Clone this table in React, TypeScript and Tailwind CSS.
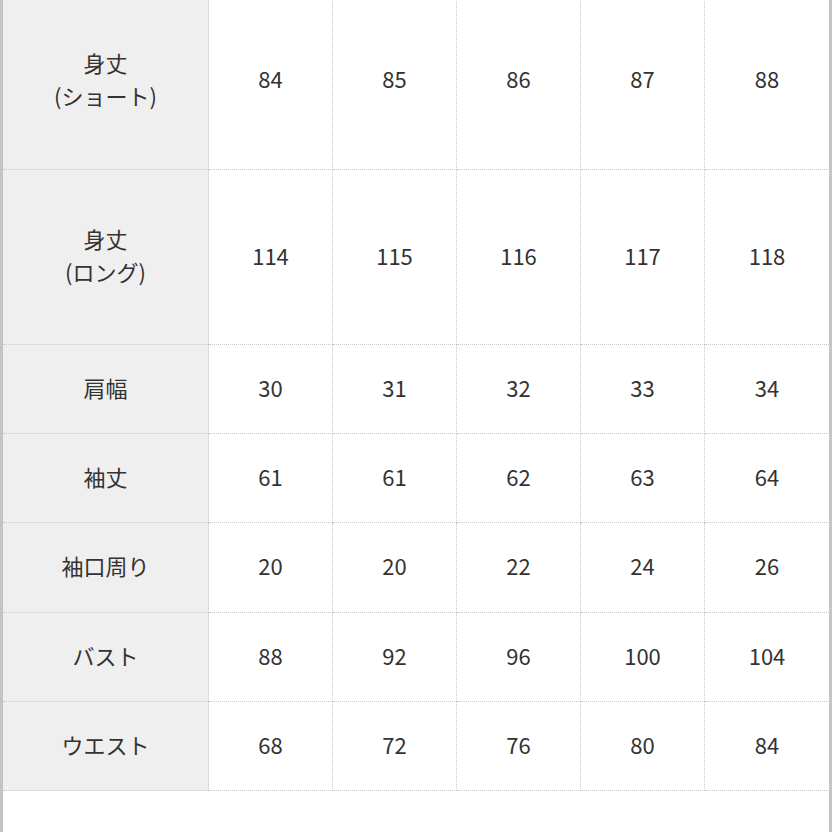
const sizes = [
  { label: ['身丈', '(ショート)'], values: [84, 85, 86, 87, 88], h: 'h-[178px]' },
  { label: ['身丈', '(ロング)'], values: [114, 115, 116, 117, 118], h: 'h-[175px]' },
  { label: ['肩幅'], values: [30, 31, 32, 33, 34], h: 'h-[89px]' },
  { label: ['袖丈'], values: [61, 61, 62, 63, 64], h: 'h-[89px]' },
  { label: ['袖口周り'], values: [20, 20, 22, 24, 26], h: 'h-[90px]' },
  { label: ['バスト'], values: [88, 92, 96, 100, 104], h: 'h-[89px]' },
  { label: ['ウエスト'], values: [68, 72, 76, 80, 84], h: 'h-[89px]' },
];

export default function App() {
  return (
    <div
      className="w-[832px] h-[832px] overflow-hidden bg-white border-x-[3px] border-[#c4c4c4] text-[#333] text-[22px]"
      style={{ fontFamily: '"Noto Sans CJK JP", "Noto Sans", sans-serif' }}
    >
      <div className="-mt-[8px] grid grid-cols-[206px_repeat(5,1fr)]">
        {sizes.map((row, i) => (
          <div key={i} className="contents">
            <div
              className={`${row.h} pb-[4px] flex flex-col items-center justify-center bg-[#efefef] border-r border-b border-dotted border-[#c8c8c8] leading-[33px]`}
            >
              {row.label.map((l) => (
                <span key={l}>{l}</span>
              ))}
            </div>
            {row.values.map((v, j) => (
              <div
                key={j}
                className={`pb-[4px] flex items-center justify-center border-b border-dotted border-[#c8c8c8] ${j < 4 ? 'border-r' : ''}`}
              >
                {v}
              </div>
            ))}
          </div>
        ))}
      </div>
    </div>
  );
}
